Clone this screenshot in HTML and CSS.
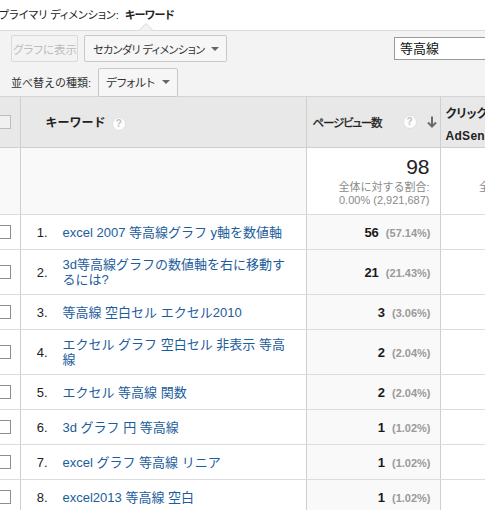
FILE: index.html
```html
<!DOCTYPE html>
<html lang="ja">
<head>
<meta charset="utf-8">
<link rel="stylesheet" href="styles.css">
</head>
<body>
<div class="page">
  <div class="dimline">プライマリ ディメンション: <b>キーワード</b></div>
  <div class="toolbar">
    <svg class="notch" width="14" height="8" viewBox="0 0 14 8"><polyline points="0,7.5 7,0.5 14,7.5" fill="#f3f3f3" stroke="#d6d6d6" stroke-width="1"/></svg>
    <div class="tb-row1">
      <span class="btn disabled">グラフに表示</span>
      <span class="btn dd sec"><span>セカンダリ ディメンション</span><i class="tri"></i></span>
      <span class="search">等高線</span>
    </div>
    <div class="tb-row2">
      <span class="lbl">並べ替えの種類:</span>
      <span class="btn dd def"><span>デフォルト</span><i class="tri"></i></span>
    </div>
  </div>
  <table class="grid">
    <colgroup><col class="c0"><col class="c1"><col class="c2"><col class="c3"></colgroup>
    <thead>
      <tr>
        <th class="chk"><span class="cb hcb"></span></th>
        <th class="kwh">キーワード <span class="help">?</span></th>
        <th class="pvh"><div class="pvin"><span class="pvt">ページビュー数</span><span class="help">?</span><svg class="arrow" width="10" height="12" viewBox="0 0 10 12"><path d="M5 0.5V10.5M1 6.5L5 10.5L9 6.5" fill="none" stroke="#6a6a6a" stroke-width="2"/></svg></div></th>
        <th class="clh"><div class="cl1">クリック</div><div class="ads">AdSense</div></th>
      </tr>
    </thead>
    <tbody>
      <tr class="sum">
        <td class="chk"></td>
        <td class="kw"></td>
        <td class="pv"><div class="big">98</div><div class="tot">全体に対する割合:<br>0.00% (2,921,687)</div></td>
        <td class="cl"><div class="big">&nbsp;</div><div class="tot">全体に対する割合:<br>0.00% (0)</div></td>
      </tr>
      <tr><td class="chk"><span class="cb"></span></td><td class="kw"><div class="kwin"><span class="idx">1.</span><a>excel 2007 等高線グラフ y軸を数値軸</a></div></td><td class="pv"><span class="n">56</span><span class="p">(57.14%)</span></td><td class="cl"></td></tr>
      <tr><td class="chk"><span class="cb"></span></td><td class="kw"><div class="kwin"><span class="idx">2.</span><a>3d等高線グラフの数値軸を右に移動するには?</a></div></td><td class="pv"><span class="n">21</span><span class="p">(21.43%)</span></td><td class="cl"></td></tr>
      <tr><td class="chk"><span class="cb"></span></td><td class="kw"><div class="kwin"><span class="idx">3.</span><a>等高線 空白セル エクセル2010</a></div></td><td class="pv"><span class="n">3</span><span class="p">(3.06%)</span></td><td class="cl"></td></tr>
      <tr><td class="chk"><span class="cb"></span></td><td class="kw"><div class="kwin"><span class="idx">4.</span><a>エクセル グラフ 空白セル 非表示 等高線</a></div></td><td class="pv"><span class="n">2</span><span class="p">(2.04%)</span></td><td class="cl"></td></tr>
      <tr><td class="chk"><span class="cb"></span></td><td class="kw"><div class="kwin"><span class="idx">5.</span><a>エクセル 等高線 関数</a></div></td><td class="pv"><span class="n">2</span><span class="p">(2.04%)</span></td><td class="cl"></td></tr>
      <tr><td class="chk"><span class="cb"></span></td><td class="kw"><div class="kwin"><span class="idx">6.</span><a>3d グラフ 円 等高線</a></div></td><td class="pv"><span class="n">1</span><span class="p">(1.02%)</span></td><td class="cl"></td></tr>
      <tr><td class="chk"><span class="cb"></span></td><td class="kw"><div class="kwin"><span class="idx">7.</span><a>excel グラフ 等高線 リニア</a></div></td><td class="pv"><span class="n">1</span><span class="p">(1.02%)</span></td><td class="cl"></td></tr>
      <tr><td class="chk"><span class="cb"></span></td><td class="kw"><div class="kwin"><span class="idx">8.</span><a>excel2013 等高線 空白</a></div></td><td class="pv"><span class="n">1</span><span class="p">(1.02%)</span></td><td class="cl"></td></tr>
    </tbody>
  </table>
</div>
</body>
</html>
```

FILE: styles.css
```css
html, body {
  margin: 0;
  padding: 0;
  background: #fff;
  overflow: hidden;
}
body {
  width: 485px;
  height: 510px;
  font-family: "Liberation Sans", Arial, "Noto Sans CJK JP", sans-serif;
  font-size: 12px;
  color: #222;
}
.page {
  width: 600px;
}
.dimline {
  height: 30px;
  line-height: 30px;
  margin-left: -1px;
  font-size: 11px;
  color: #222;
  font-feature-settings: "palt";
  white-space: nowrap;
}
.dimline b {
  margin-left: 3px;
  letter-spacing: -0.4px;
}
.toolbar {
  position: relative;
  background: #f3f3f3;
  border-top: 1px solid #dcdcdc;
  height: 66px;
  padding: 4px 0 0 11px;
  box-sizing: border-box;
}
.notch {
  position: absolute;
  left: 139px;
  top: -8px;
}
.tb-row1 {
  display: flex;
  align-items: center;
  height: 27px;
}
.btn {
  display: inline-flex;
  align-items: center;
  box-sizing: border-box;
  height: 27px;
  border: 1px solid #c8c8c8;
  border-radius: 2px;
  background: #f6f6f6;
  color: #333;
  font-size: 11px;
  padding: 0 8px;
  white-space: nowrap;
  font-feature-settings: "palt";
  flex: none;
}
.btn.disabled {
  width: 67px;
  padding: 0 0 0 1px;
  color: #bdbdbd;
  border-color: #dadada;
  background: #f3f3f3;
  font-size: 11.5px;
}
.btn.sec {
  margin-left: 6px;
  width: 143px;
  justify-content: space-between;
  padding: 0 7px 0 8px;
  letter-spacing: -0.5px;
}
.tri {
  display: inline-block;
  width: 0;
  height: 0;
  border-left: 4px solid transparent;
  border-right: 4px solid transparent;
  border-top: 4px solid #666;
  margin-left: 6px;
}
.search {
  margin-left: 167px;
  box-sizing: border-box;
  width: 120px;
  height: 23px;
  border: 1px solid #9a9a9a;
  background: #fff;
  font-size: 13px;
  line-height: 21px;
  padding-left: 5px;
  color: #111;
  flex: none;
}
.tb-row2 {
  display: flex;
  align-items: center;
  margin-top: 6px;
  height: 28px;
}
.lbl {
  color: #333;
  font-size: 11px;
  width: 87px;
  white-space: nowrap;
  flex: none;
}
.btn.def {
  height: 29px;
  width: 80px;
  justify-content: space-between;
  padding: 0 7px 0 7px;
  font-size: 11.5px;
}
table.grid {
  border-collapse: collapse;
  table-layout: fixed;
  width: 580px;
}
col.c0 { width: 20px; }
col.c1 { width: 286px; }
col.c2 { width: 134px; }
col.c3 { width: 140px; }
th, td {
  padding: 0;
  border-top: 1px solid #dcdcdc;
  border-bottom: 1px solid #dcdcdc;
}
thead th {
  height: 50px;
  background: #e8e8e8;
  border-top: 1px solid #d4d4d4;
  border-bottom: 1px solid #cfcfcf;
  text-align: left;
  font-weight: bold;
  font-size: 12px;
  vertical-align: middle;
  white-space: nowrap;
}
th.chk, td.chk {
  border-right: 1px solid #cfcfcf;
  overflow: hidden;
}
th.pvh, td.pv {
  border-left: 1px solid #cfcfcf;
  border-right: 1px solid #cfcfcf;
}
th.kwh {
  padding-left: 25px;
}
.help {
  display: inline-block;
  box-sizing: border-box;
  width: 14px;
  height: 14px;
  border-radius: 50%;
  background: #fdfdfd;
  border: 1px solid #e0e0e0;
  color: #c2c2c2;
  font-size: 10px;
  line-height: 12px;
  text-align: center;
  vertical-align: middle;
  margin-left: 3px;
  font-weight: bold;
  flex: none;
}
th.pvh {
  padding-left: 6px;
}
.pvin {
  display: flex;
  align-items: center;
}
.pvt {
  width: 90px;
  font-size: 11.5px;
  letter-spacing: -1.2px;
  font-weight: normal;
  color: #222;
  -webkit-text-stroke: 0.3px #222;
  font-feature-settings: "palt";
}
th.pvh .help {
  margin-left: 0;
}
.arrow {
  display: block;
  margin-left: 10px;
  flex: none;
}
th.clh {
  padding-left: 5px;
  font-feature-settings: "palt";
  overflow: hidden;
}
.cl1 {
  line-height: 16px;
  margin-top: 6px;
}
.ads {
  line-height: 16px;
  margin-top: 6px;
  letter-spacing: 0.3px;
}
.cb {
  display: block;
  box-sizing: border-box;
  width: 14px;
  height: 14px;
  border: 1px solid #8e8e8e;
  background: #fff;
  margin-left: -3px;
}
.hcb {
  border-color: #bdbdbd;
  background: #f0f0f0;
}
tr.sum td {
  height: 66px;
  background: #f9f9f9;
  vertical-align: top;
}
tr.sum td.pv, tr.sum td.cl {
  background: #fff;
  text-align: right;
  padding-right: 10px;
  white-space: nowrap;
}
.big {
  font-size: 21px;
  line-height: 22px;
  margin-top: 8px;
  color: #222;
}
.tot {
  color: #8a8a8a;
  font-size: 11px;
  line-height: 13px;
  margin-top: 3px;
}
tbody tr td {
  height: 34px;
  vertical-align: middle;
}
tbody td.pv {
  background: #f9f9f9;
  text-align: right;
  padding-right: 9px;
  white-space: nowrap;
}
td.kw {
  background: #fff;
}
.kwin {
  display: flex;
  align-items: center;
  padding: 7px 10px 7px 0;
}
.idx {
  flex: none;
  width: 27px;
  text-align: right;
  font-size: 13px;
  color: #222;
}
.kwin a {
  margin-left: 15px;
  color: #1c5d9c;
  font-size: 13px;
  line-height: 15px;
}
.n {
  font-size: 13px;
  font-weight: bold;
  color: #1a1a1a;
}
.p {
  display: inline-block;
  margin-left: 7px;
  font-size: 11px;
  font-weight: bold;
  color: #9a9a9a;
}
td.cl {
  background: #fff;
}
```
